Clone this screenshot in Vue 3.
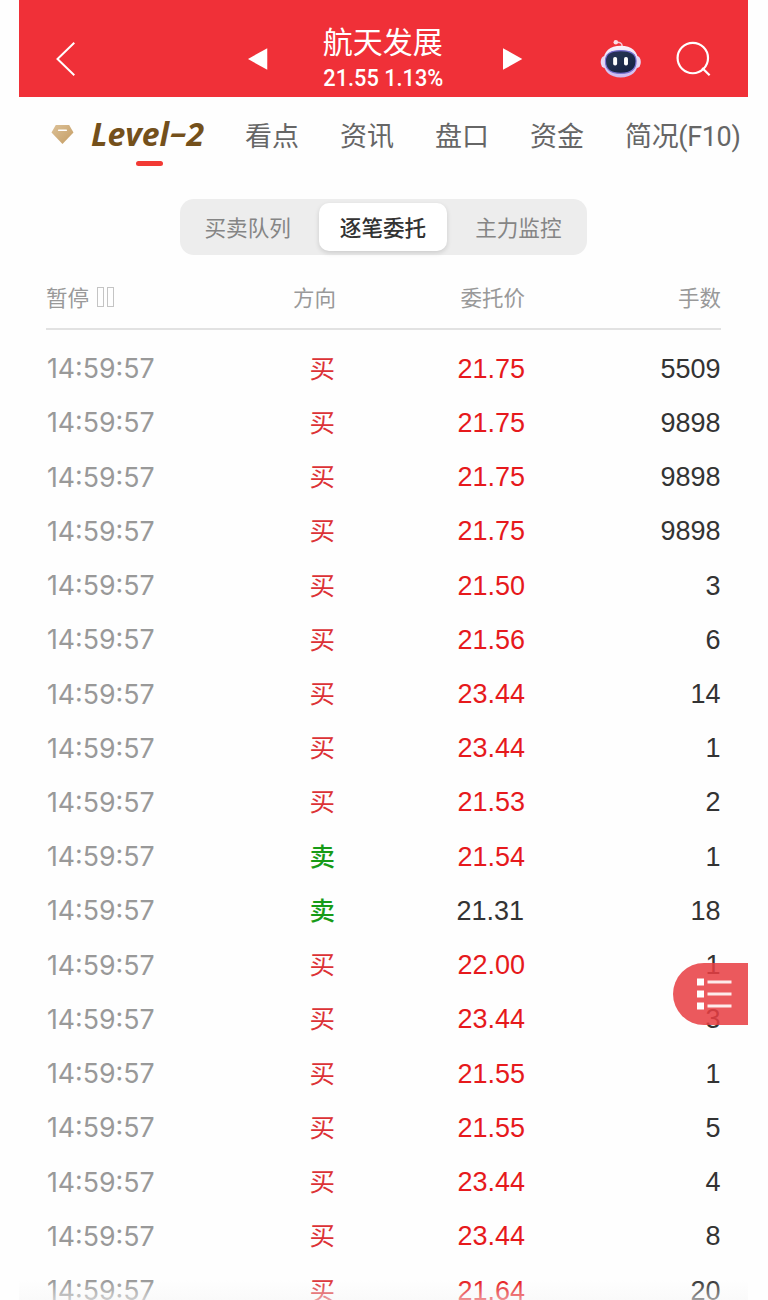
<template>
  <div class="screen">
    <header class="topbar">
      <svg class="back" width="20" height="36" viewBox="0 0 20 36">
        <path d="M18.500 1.500 1.500 18l17 16.500" fill="none" stroke="#fff" stroke-width="2" />
      </svg>
      <svg class="prev" width="20" height="22" viewBox="0 0 20 22">
        <path d="M0 11 19.500 0v22z" fill="#fff" />
      </svg>
      <div class="stock">
        <h1>航天发展</h1>
        <p>21.55 1.13%</p>
      </div>
      <svg class="next" width="20" height="22" viewBox="0 0 20 22">
        <path d="M19.500 11 0 0v22z" fill="#fff" />
      </svg>
      <svg class="robot" width="42" height="40" viewBox="0 0 42 40">
        <defs>
          <linearGradient id="shell" x1="0" y1="0" x2="0" y2="1">
            <stop offset="0" stop-color="#fbf3fb" />
            <stop offset="1" stop-color="#cdb9ee" />
          </linearGradient>
          <linearGradient id="visor" x1="0" y1="0" x2="0.8" y2="1">
            <stop offset="0" stop-color="#2b2b62" />
            <stop offset="0.35" stop-color="#233350" />
            <stop offset="1" stop-color="#151f42" />
          </linearGradient>
        </defs>
        <path d="M16 3.200q6-.8 6.500 4" fill="none" stroke="#f6c6d4" stroke-width="1.500" />
        <circle cx="16" cy="3" r="2.300" fill="#fbdce4" />
        <ellipse cx="4.500" cy="23" rx="3.800" ry="6" fill="#e6d8f5" />
        <ellipse cx="37.500" cy="23" rx="3.800" ry="6" fill="#e6d8f5" />
        <path d="M21 6.500c11 0 17.500 5.500 17.500 15.500 0 11-6.500 16.600-17.500 16.600S3.500 33 3.500 22C3.500 12 10 6.500 21 6.500z" fill="url(#shell)" />
        <path d="M21 11.500c10 0 15.500 3 15.500 10.500 0 9-5.500 12.500-15.500 12.500S5.500 31 5.500 22c0-7.500 5.500-10.500 15.500-10.500z" fill="url(#visor)" stroke="#7770d0" stroke-width="1.200" />
        <rect x="13.300" y="18" width="4" height="8.500" rx="1.800" fill="#fff" />
        <rect x="24.300" y="18" width="4" height="8.500" rx="1.800" fill="#fff" />
      </svg>
      <svg class="search" width="36" height="36" viewBox="0 0 36 36">
        <g fill="none" stroke="#fff" stroke-width="2.200">
          <circle cx="17" cy="17" r="15.400" />
          <path d="m26.500 27 7.500 7.500" />
        </g>
      </svg>
    </header>

    <nav class="tabs">
      <a class="level">
        <svg width="24" height="21" viewBox="0 0 24 21">
          <defs>
            <linearGradient id="gem" x1="0" y1="0" x2="1" y2="1">
              <stop offset="0" stop-color="#dcc198" />
              <stop offset="1" stop-color="#c49c62" />
            </linearGradient>
          </defs>
          <path d="M5 .5h14L23.500 8.500 12 20.500.5 8.500z" fill="url(#gem)" />
          <path d="M8 6h8" stroke="#fff" stroke-width="1.600" stroke-linecap="round" />
        </svg>
        <span class="level-name">Level<i class="dash">-</i>2</span>
      </a>
      <a v-for="tab in tabs" :key="tab">{{ tab }}</a>
    </nav>

    <div class="segment">
      <button
        v-for="mode in modes"
        :key="mode"
        :class="{ active: mode === activeMode }"
        @click="activeMode = mode"
      >{{ mode }}</button>
    </div>

    <section class="orders">
      <div class="row head">
        <span class="pause">暂停<i></i><i></i></span>
        <span>方向</span>
        <span>委托价</span>
        <span>手数</span>
      </div>
      <div v-for="(order, index) in orders" :key="index" class="row">
        <span class="time">14:59:57</span>
        <span class="side" :class="{ sell: order[0] === '卖' }">{{ order[0] }}</span>
        <span class="price" :class="{ flat: order[1] === '21.31' }">{{ order[1] }}</span>
        <span class="lots">{{ order[2] }}</span>
      </div>
    </section>

    <button class="float-menu">
      <svg width="36" height="32" viewBox="0 0 36 32">
        <path d="M0 .5h7v7H0zM0 12.500h7v7H0zM0 24.500h7v7H0z" fill="#fff" />
        <path d="M10.500 4h24M10.500 16h24M10.500 28h24" stroke="#fff" stroke-opacity=".88" stroke-width="3.200" />
      </svg>
    </button>
    <div class="fade"></div>
  </div>
</template>

<script setup>
import { ref } from 'vue'

const tabs = ['看点', '资讯', '盘口', '资金', '简况(F10)']
const modes = ['买卖队列', '逐笔委托', '主力监控']
const activeMode = ref('逐笔委托')

const orders = [
  ['买', '21.75', 5509],
  ['买', '21.75', 9898],
  ['买', '21.75', 9898],
  ['买', '21.75', 9898],
  ['买', '21.50', 3],
  ['买', '21.56', 6],
  ['买', '23.44', 14],
  ['买', '23.44', 1],
  ['买', '21.53', 2],
  ['卖', '21.54', 1],
  ['卖', '21.31', 18],
  ['买', '22.00', 1],
  ['买', '23.44', 3],
  ['买', '21.55', 1],
  ['买', '21.55', 5],
  ['买', '23.44', 4],
  ['买', '23.44', 8],
  ['买', '21.64', 20],
]
</script>

<style>
body {
  margin: 0;
  background: #fff;
}
</style>

<style scoped>
.screen {
  position: relative;
  box-sizing: border-box;
  width: 768px;
  height: 1300px;
  padding: 0 20px 0 19px;
  overflow: hidden;
  background: #fefefe;
  font-family: "Noto Sans CJK SC", sans-serif;
}

.topbar {
  display: flex;
  align-items: center;
  box-sizing: border-box;
  height: 97px;
  padding: 21px 36px 0 37px;
  background: #f03038;
  color: #fff;
}
.prev {
  margin-left: 172px;
}
.stock {
  width: 122px;
  margin: 0 60px 0 55px;
  text-align: center;
  white-space: nowrap;
}
.stock h1 {
  margin: -2px 0 0;
  font-size: 30px;
  font-weight: 400;
  line-height: 38px;
}
.stock p {
  margin: 4px -10px 0;
  font: 500 23px/32px Roboto, sans-serif;
  transform: scaleX(0.945);
}
.robot {
  margin: 0 35px 0 77px;
}

.tabs {
  display: flex;
  align-items: center;
  gap: 41px;
  box-sizing: border-box;
  height: 76px;
  padding: 0 0 2px 32px;
  color: #666;
  font-family: Roboto, "Noto Sans CJK SC", sans-serif;
  font-size: 27px;
  white-space: nowrap;
}
.tabs a:last-child {
  letter-spacing: -0.35px;
}
.level {
  position: relative;
  display: flex;
  align-items: center;
  width: 153px;
}
.level::after {
  content: "";
  position: absolute;
  left: 85px;
  top: 47px;
  width: 27px;
  height: 5px;
  border-radius: 3px;
  background: #f23a34;
}
.level-name {
  margin-left: 17px;
  color: #74501b;
  font: italic 700 32px/40px "Open Sans", sans-serif;
}
.dash {
  display: inline-block;
  margin: 0 3px 0 4px;
  transform: translateY(-2px) scale(1.7, 0.9);
}

.segment {
  display: flex;
  box-sizing: border-box;
  width: 407px;
  height: 56px;
  margin: 26px 0 0 161px;
  padding: 4px 1px 4px 0;
  border-radius: 14px;
  background: #ededed;
}
.segment button {
  flex: 1;
  margin: 0 4px;
  padding: 0;
  border: 0;
  border-radius: 10px;
  background: none;
  color: #858585;
  font: 400 21.600px/46px "Noto Sans CJK SC", sans-serif;
}
.segment .active {
  background: #fff;
  box-shadow: 0 2px 5px rgba(0, 0, 0, 0.14);
  color: #333;
  font-weight: 500;
}

.orders {
  padding: 0 27px;
}
.row {
  display: grid;
  grid-template-columns: 110px 180px 189px 196px;
  align-items: center;
  height: 54.240px;
  color: #333;
  font-size: 27px;
  text-align: right;
  white-space: nowrap;
}
.row.head {
  box-sizing: border-box;
  height: 75px;
  margin-bottom: 12px;
  padding-top: 10px;
  border-bottom: 2px solid #e2e2e2;
  color: #999;
  font-size: 21.500px;
}
.pause {
  display: flex;
  align-items: center;
}
.pause i {
  box-sizing: border-box;
  width: 7px;
  height: 20px;
  margin-left: 3px;
  border: 1px solid #c4c4c4;
}
.pause i:first-of-type {
  margin-left: 8px;
}
.time {
  padding: 0 0 2px 1px;
  color: #999;
  font: 400 26.700px Inter, sans-serif;
  text-align: left;
}
.side {
  padding: 0 1px 5px 0;
  color: #dc3236;
  font-size: 25.500px;
  line-height: 36px;
}
.sell {
  color: #179b17;
  font-weight: 500;
}
.price,
.lots {
  font-family: "Liberation Sans", sans-serif;
}
.price {
  color: #e6191c;
}
.price.flat {
  padding-right: 1px;
  color: #333;
}
.lots {
  padding-right: 0.500px;
}

.float-menu {
  position: absolute;
  top: 963px;
  right: 20px;
  display: flex;
  align-items: center;
  width: 75px;
  height: 62px;
  padding: 0 0 0 24px;
  border: 0;
  border-radius: 31px 0 0 31px;
  background: rgba(232, 62, 66, 0.86);
}
.fade {
  position: absolute;
  left: 19px;
  right: 20px;
  bottom: 0;
  height: 20px;
  background: linear-gradient(rgba(250, 250, 250, 0), rgba(246, 246, 246, 0.55));
}
</style>
